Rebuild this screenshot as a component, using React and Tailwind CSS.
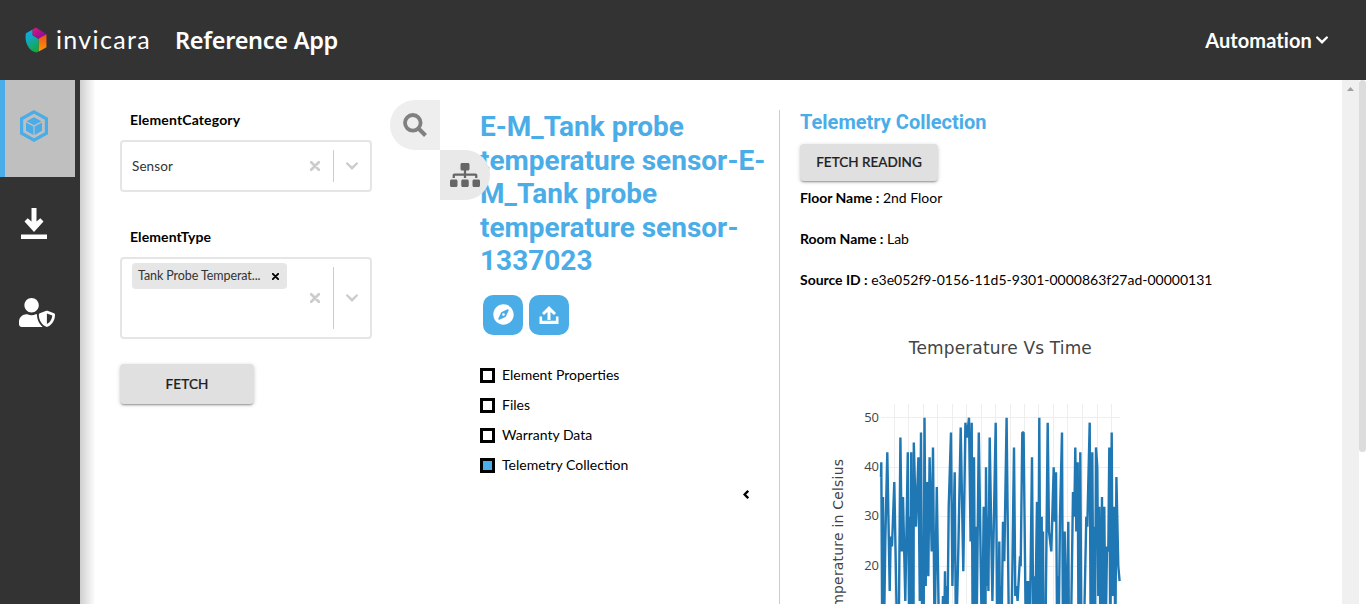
import React from "react";
import { FaUserShield, FaSitemap, FaCompass } from "react-icons/fa";

const READINGS = [
  [881, 38], [881.3, 41], [882.3, 3], [883, 34], [883.9, 5], [885.3, 25], [887.3, 43], [889.7, 15], [890.7, 26], [892, 24], [894.3, 37],
  [896.7, 10], [898.7, 5], [900.4, 46], [901.8, 23], [903, 34], [905.3, 13], [907.8, 43], [909.3, 3], [910.2, 30], [910.8, 3], [911.2, 43],
  [912.3, 5], [913, 34], [913.5, 3], [913.8, 45], [916, 28], [918.4, 42], [919.8, 13], [921, 47], [922.2, 5], [923, 22], [923.6, 5], [924.5, 50], [925.7, 16],
  [927, 37], [928.3, 18], [929.6, 42], [931.7, 23], [933, 44], [934.6, 5], [936.8, 36], [939, 6], [941.4, 3], [943, 14],
  [944, 3], [945, 19], [945.6, 3], [946.6, 16], [947.2, 3], [948.7, 32], [951, 47], [952.4, 16], [954.7, 39], [956, 3], [958.4, 24],
  [960.7, 48], [963.3, 19], [965.4, 49], [967, 46], [969, 50], [970.6, 25], [971.7, 49], [972.7, 3], [974, 42],
  [975.2, 3], [975.8, 28], [976.4, 3], [978.8, 47], [982, 3], [983.7, 32], [984.4, 3], [985, 28], [985.4, 3], [986, 40], [987.2, 16], [987.8, 30], [988.4, 15], [989.7, 46], [992.4, 13],
  [995.7, 49], [997.4, 3], [998, 20], [998.4, 3], [999.3, 25], [1000.2, 3], [1000.8, 16], [1001.3, 3], [1003, 29], [1004.3, 21], [1006.6, 50], [1009, 5], [1011.3, 3],
  [1014, 44], [1015.3, 14], [1016.4, 16], [1017.6, 13], [1020, 22], [1020.7, 20], [1022.3, 47], [1023.6, 47],
  [1026, 3], [1027.6, 17], [1028.2, 3], [1028.8, 17], [1029.6, 3], [1032, 42], [1033.4, 3], [1034.2, 18], [1034.8, 3], [1037, 33], [1038, 3], [1039.3, 50], [1040.5, 3],
  [1041.7, 30], [1042.2, 3], [1043, 27], [1043.6, 3], [1045.3, 3], [1047.7, 49], [1049, 27], [1051.3, 23], [1053.7, 40], [1054.7, 29],
  [1056, 39], [1057.2, 3], [1057.9, 18], [1058.5, 3], [1060, 30], [1062, 47], [1063, 3], [1063.6, 24], [1064, 3], [1064.7, 27], [1065.8, 3], [1068.3, 29], [1069, 3], [1070.7, 3],
  [1073, 35], [1074.3, 30], [1075.3, 44], [1076.3, 27], [1077.7, 41], [1078.6, 3], [1079.2, 32], [1079.7, 3], [1080.3, 43], [1081.4, 3],
  [1084.3, 10], [1086.3, 30], [1087.3, 28], [1089.7, 49], [1090.7, 3], [1091.3, 34], [1091.8, 3], [1092.3, 43], [1093.5, 3], [1094.4, 28], [1095, 3], [1096, 44],
  [1097.3, 40], [1098.3, 14], [1099.3, 32], [1100.5, 3], [1102, 34], [1102.5, 3], [1103.3, 29], [1103.8, 3], [1104.3, 32], [1105.5, 3],
  [1107, 24], [1108.3, 23], [1109.3, 44], [1110.3, 3], [1111.7, 47], [1112.6, 14], [1113.2, 30], [1113.7, 14], [1114.3, 32], [1115.3, 3],
  [1116.4, 38], [1118.3, 20], [1119.6, 17],
];
const GRID_X = [894.5, 908.5, 923.5, 937.5, 952.5, 966.5, 981.5, 995.5, 1010.5, 1024.5, 1038.5, 1053.5, 1067.5, 1082.5, 1097.5, 1111.5];
const points = READINGS.map(([x, v]) => `${x - 800},${665.3 - v * 4.952 - 320}`).join(" ");

function Chart() {
  return (
    <svg className="block h-[284px] w-[540px]" viewBox="0 0 540 284" fontFamily="'Open Sans', sans-serif" fill="#444">
      <text x="200.3" y="34" fontSize="17" textAnchor="middle" fontFamily="'DejaVu Sans', sans-serif" fill="#444" textLength="183">Temperature Vs Time</text>
      <g stroke="#eee" strokeWidth="1">
        {GRID_X.map((x) => <line key={x} x1={x - 800} x2={x - 800} y1="84" y2="284" />)}
        {[97.5, 147.5, 196.5, 246.5].map((y) => <line key={y} x1="81" x2="320" y1={y} y2={y} />)}
      </g>
      <polyline points={points} fill="none" stroke="#1f77b4" strokeWidth="2.4" strokeLinejoin="bevel" />
      {[50, 40, 30, 20].map((n, i) => (
        <text key={n} x="79" y={101.6 + i * 49.4} fontSize="13" textAnchor="end">{n}</text>
      ))}
      <text transform="translate(43 139) rotate(-90)" fontSize="14" textAnchor="end" textLength="164" fontFamily="'DejaVu Sans', sans-serif">Temperature in Celsius</text>
    </svg>
  );
}

function Logo() {
  return (
    <svg className="h-[26px] w-[23px]" viewBox="0 0 23 26">
      <defs>
        <linearGradient id="lg-a" x1="0" y1="0" x2="0.4" y2="1"><stop stopColor="#00aeef" /><stop offset="0.45" stopColor="#13a8bd" /><stop offset="1" stopColor="#12a84b" /></linearGradient>
        <linearGradient id="lg-b" x1="0" y1="0" x2="1" y2="1"><stop stopColor="#e5177b" /><stop offset="1" stopColor="#7209a8" /></linearGradient>
        <linearGradient id="lg-c" x1="0" y1="0" x2="0" y2="1"><stop stopColor="#f04e23" /><stop offset="1" stopColor="#ff9800" /></linearGradient>
      </defs>
      <path d="M8 2 1 6C-1 15 4 25 12 26l2.5-1.3V12L8 8Z" fill="url(#lg-a)" />
      <path d="M8 2 11.5 0 22.5 7 14.5 11.5 8 8Z" fill="url(#lg-b)" />
      <path d="M22.5 7v13.5L14.5 25V11.5Z" fill="url(#lg-c)" />
    </svg>
  );
}

function Chevron({ className }) {
  return (
    <svg className={className} viewBox="0 0 12 8" fill="none" stroke="currentColor" strokeWidth="2.4">
      <path d="M1.2 1.5 6 6.2 10.8 1.5" strokeLinecap="round" />
    </svg>
  );
}

function Cross({ className }) {
  return (
    <svg className={className} viewBox="0 0 10 10" fill="none" stroke="currentColor" strokeWidth="2.7">
      <path d="M1.2 1.2 8.8 8.8M8.8 1.2 1.2 8.8" strokeLinecap="round" />
    </svg>
  );
}

function Indicators() {
  return (
    <div className="flex items-stretch text-[#ccc]">
      <div className="flex w-9 items-center justify-center"><Cross className="h-[10px] w-[10px]" /></div>
      <div className="my-2 w-px bg-[#ccc]" />
      <div className="flex w-9 items-center justify-center"><Chevron className="h-2 w-3" /></div>
    </div>
  );
}

function Check({ label, on }) {
  return (
    <div className="flex h-[30px] items-center">
      <span className={on ? "h-[15px] w-[15px] border-[3px] border-black bg-[#4aade8]" : "h-[15px] w-[15px] border-[3px] border-black bg-white"} />
      <span className="-mt-0.5 ml-[7px] text-[14px]">{label}</span>
    </div>
  );
}

function Field({ name, value }) {
  return (
    <div className="h-[41px] whitespace-nowrap text-[14px] leading-[20px]">
      <b className="tracking-[-0.03px]">{name} :</b> <span>{value}</span>
    </div>
  );
}

const BTN = "flex items-center justify-center rounded bg-[#e0e0e0] text-[13.5px] font-medium text-[#212121] [-webkit-text-stroke:0.2px_#212121] shadow-[0_2px_2px_-1px_rgba(0,0,0,0.35),0_1px_4px_rgba(0,0,0,0.18)]";

export default function App() {
  return (
    <div className="flex h-[604px] w-[1366px] flex-col overflow-hidden bg-white font-[Lato,sans-serif] text-black">
      <header className="flex h-20 shrink-0 items-center bg-[#333] text-white">
        <div className="ml-[25px] flex w-[126px] items-center">
          <Logo />
          <span className="-mt-[3px] ml-[9px] whitespace-nowrap text-[25px] leading-6 tracking-[1.35px]">invicara</span>
        </div>
        <h1 className="ml-[24px] whitespace-nowrap pt-px font-['Noto_Sans',Lato,sans-serif] text-[23.5px] font-semibold tracking-[-0.28px]">Reference App</h1>
        <div className="ml-auto mr-[38px] flex items-center gap-1 text-[20px] font-bold tracking-[0.1px]">
          Automation <Chevron className="h-2 w-3" />
        </div>
      </header>

      <div className="flex min-h-0 flex-1">
        <nav className="w-20 shrink-0 bg-[#333] text-white">
          <div className="flex h-[97px] w-[75px] items-center border-l-[5px] border-[#4aade8] bg-[#bfbfbf]">
            <svg className="-mt-[5px] ml-[15px] h-8 w-7" viewBox="0 0 28 32" fill="none">
              <path d="M14 1.8 26.4 8.8V23.2L14 30.2 1.6 23.2V8.8Z" stroke="#4aade8" strokeWidth="3.2" />
              <path d="M14 7.2 21.5 11.2 14 15.2 6.5 11.2Z M6 12.5 13.4 16.4V25L6 20.8Z M22 12.5 14.6 16.4V25L22 20.8Z" fill="#4aade8" />
            </svg>
          </div>
          <div className="flex h-[93px] items-center">
            <svg className="-mt-px ml-[21px] h-[31px] w-[26px]" viewBox="0 0 26 31" fill="#fff">
              <path d="M10.5 0h5v13.5l3.8-3.3 3.2 3.2L13 24 3.5 13.4l3.2-3.2 3.8 3.3ZM0 26.5h26V31H0Z" />
            </svg>
          </div>
          <div className="flex h-[84px] items-center"><FaUserShield className="ml-[19px] h-[29px] w-[36px]" /></div>
        </nav>

        <main className="flex min-w-0 flex-1 bg-linear-to-r from-[#cfcfcf] via-white via-[1.2%] to-white">
          <section className="w-[310px] shrink-0 pl-10 pt-[30px]">
            <div className="ml-[10px] text-[14px] font-bold leading-5 tracking-[0.15px]">ElementCategory</div>
            <div className="mt-[10px] flex h-[52px] w-[252px] justify-between rounded border-2 border-[#e5e5e5] bg-white">
              <span className="ml-[10px] self-center text-[13.5px] tracking-[0.1px] text-[#333]">Sensor</span>
              <Indicators />
            </div>
            <div className="ml-[10px] mt-[35px] text-[14px] font-bold leading-5 tracking-[0.1px]">ElementType</div>
            <div className="mt-[10px] flex h-[82px] w-[252px] justify-between rounded border-2 border-[#e5e5e5] bg-white">
              <div className="ml-[10px] mt-1 flex h-[26px] w-[155px] items-center rounded-sm bg-[#e6e6e6] pl-1.5 text-[12.5px] text-[#333]">
                <span className="w-[126px] whitespace-nowrap tracking-[-0.08px]">Tank Probe Temperat...</span>
                <Cross className="ml-[8px] h-[7px] w-[7px] text-black" />
              </div>
              <Indicators />
            </div>
            <button className={BTN + " mt-[25px] h-10 w-[134px] tracking-[0.1px]"}>FETCH</button>
          </section>

          <section className="relative w-[389px] shrink-0 pl-[90px] pt-[30px]">
            <div className="absolute left-0 top-5 flex h-[50px] w-[50px] items-center justify-center rounded-l-full bg-[#eee] text-[#808080]">
              <svg className="h-6 w-6" viewBox="0 0 24 24" fill="none" stroke="currentColor"><circle cx="9.8" cy="9.8" r="7.8" strokeWidth="3.8" /><path d="m15.5 15.5 7 7" strokeWidth="4" /></svg>
            </div>
            <div className="absolute left-[50px] top-[70px] z-10 flex h-[50px] w-[50px] items-center justify-center rounded-r-full bg-[#e9e9e9] text-[#666]">
              <FaSitemap className="h-6 w-[30px]" />
            </div>
            <h2 className="w-[299px] whitespace-nowrap font-[Roboto,sans-serif] text-[28px] font-bold leading-[33.5px] text-[#4aade8]">
              E-M_Tank probe<br />temperature sensor-E-<br />M_Tank probe<br />temperature sensor-<br />1337023
            </h2>
            <div className="ml-[3px] mt-[17.5px] flex gap-1.5 text-white">
              <div className="flex h-10 w-10 items-center justify-center rounded-[10px] bg-[#4aade8]"><FaCompass className="-mt-0.5 h-[21px] w-[21px]" /></div>
              <div className="flex h-10 w-10 items-center justify-center rounded-[10px] bg-[#4aade8]">
                <svg className="h-[18px] w-[20px]" viewBox="0 0 20 18" fill="#fff"><path d="M10 0 17 7l-2 2-3.5-3v8h-3V6L5 9 3 7ZM.5 10.5h2.6v4.3h13.8v-4.3h2.6V18H.5Z" /></svg>
              </div>
            </div>
            <div className="mt-[25px]">
              <Check label="Element Properties" />
              <Check label="Files" />
              <Check label="Warranty Data" />
              <Check label="Telemetry Collection" on />
            </div>
            <div className="mr-[30px] mt-[10px] flex justify-end">
              <svg className="h-[9px] w-1.5" viewBox="0 0 6 9" fill="none" stroke="#000" strokeWidth="2.3"><path d="M5.2.8 1.6 4.5 5.2 8.2" /></svg>
            </div>
          </section>

          <section className="mt-[30px] w-[563px] shrink-0 border-l border-[#ccc] pl-[20px]">
            <h3 className="font-[Roboto,sans-serif] text-[20px] font-bold leading-6 text-[#4aade8]">Telemetry Collection</h3>
            <button className={BTN + " mt-[10px] h-[37px] w-[138px] pb-px tracking-[0px]"}>FETCH READING</button>
            <div className="mt-[7px] h-[132px]">
              <Field name="Floor Name" value="2nd Floor" />
              <Field name="Room Name" value="Lab" />
              <Field name="Source ID" value="e3e052f9-0156-11d5-9301-0000863f27ad-00000131" />
            </div>
            <Chart />
          </section>

          <div className="flex w-6 shrink-0">
            <div className="flex w-[17px] justify-center bg-[#f0f0f0] pt-[7px]">
              <svg className="h-1 w-[7px]" viewBox="0 0 7 4" fill="#a0a0a0"><path d="M3.5 0 7 4H0Z" /></svg>
            </div>
            <div className="w-[7px] bg-white"><div className="h-[372px] rounded-full bg-[#dcdcdc]" /></div>
          </div>
        </main>
      </div>
    </div>
  );
}
